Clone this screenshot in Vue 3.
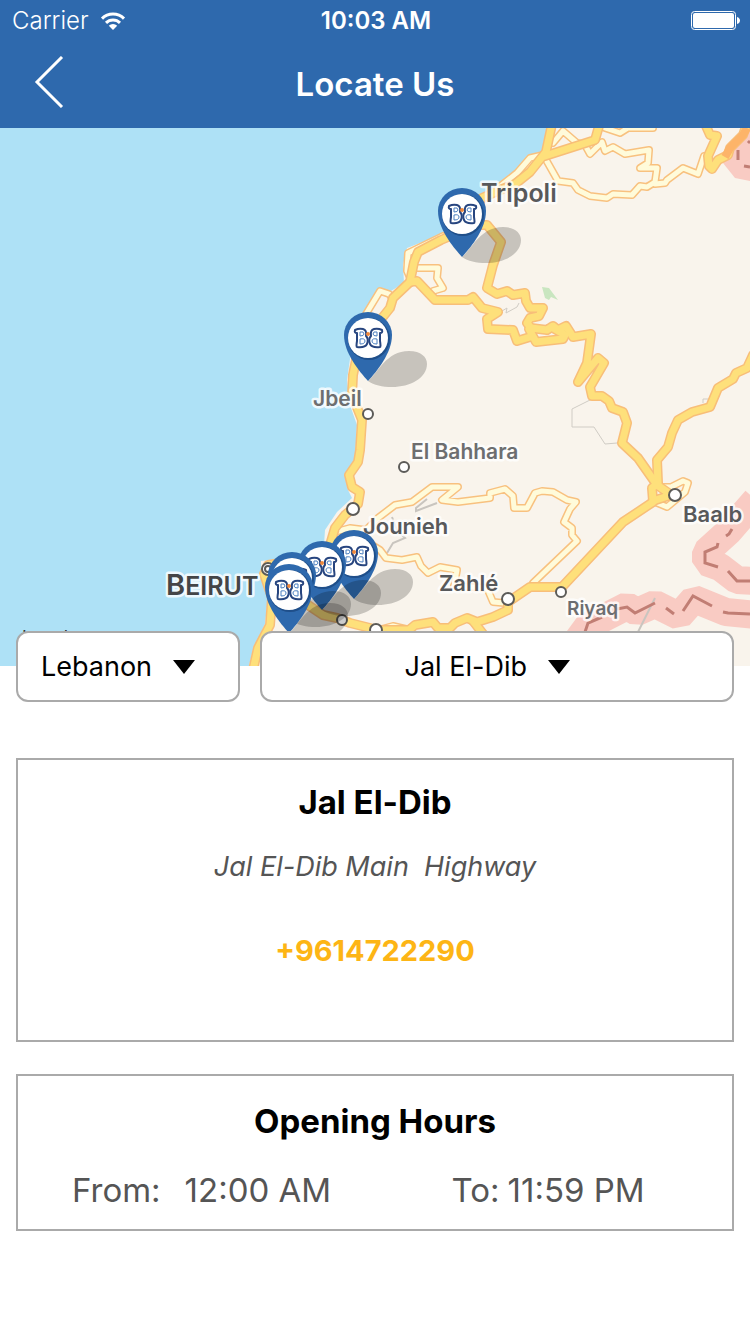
<script setup>
import { ref } from 'vue'

// LocateUs - store locator screen


const countries = ['Lebanon']
const branches = ['Jal El-Dib']

const country = ref('Lebanon')
const branch = ref('Jal El-Dib')
const address = 'Jal El-Dib Main  Highway'
const phone = '+9614722290'

// Map roads, drawn as casing first and fill on top
const minor_roads = [
   'M543 155L530 158L517 173L498 188',
   'M443 236L408 253L407 271L411 280',
   'M418 268L438 268L437 278L443 288L433 291',
   'M366 314L380 291L389 294L393 299',
   'M545 158L558 181L573 183L578 190L590 196L607 198L613 194L632 195L640 186L647 187L655 182L657 168L640 168L648 163L649 150L625 154L613 147L605 151L602 142L590 154L585 145L577 143L563 131L553 143',
   'M655 184L665 183L667 180L683 168L698 174L704 156',
   'M605 128L620 133L628 128L653 128',
   'M335 532L350 528L366 530L378 518L395 505L412 502L432 487L458 487L442 500L458 502L490 498L490 493L505 489L513 496L514 508L527 508L535 493L542 491L553 492L567 500L576 502L570 509L564 522L572 528L572 535L577 541L533 583',
   'M372 545L380 550L386 558L402 560L417 557L421 566L428 573L440 567L457 570L454 586L487 588L493 602L504 603',
   'M660 487L671 487L683 481L688 483L685 492L667 507L655 502',
   'M378 630L393 626L406 629',
]
const major_roads = [
   'M552 124L546 152L530 172L515 184L500 190L482 198L470 215L460 232L441 240L418 252L414 262L410 282L393 298L390 308L382 318L370 328L358 350L353 375L352 395L362 420L360 450L358 462L349 475L352 487L360 492L358 504L345 515L335 528L330 545L318 560',
   'M545 156L595 140L599 126',
   'M706 126L710 135L717 136L708 156L709 166L712 169L718 160L728 155L730 148L743 135L747 124',
   'M480 225L487 225L501 242L493 265L487 288L497 294L507 291L513 295L525 293L526 301L530 308L543 308L539 316L530 318L527 323L531 328L547 330L553 326L558 330L566 326L573 337L591 334L587 363L578 382L598 358L604 363L590 387L592 396L602 396L609 401L612 408L623 412L627 423L622 443L638 458L657 485L670 494',
   'M410 282L417 281L435 300L468 300L473 297L482 308L498 312L487 319L488 329L513 330L517 341L530 337',
   'M529 329L536 342L563 339L565 335L553 328',
   'M658 483L657 460L668 447L672 433L678 420L692 412L710 407L718 388L733 379L736 373L747 368L753 355',
   'M657 484L652 488L653 501L671 495',
   'M653 502L623 522L562 587L530 587L508 602L508 610L493 617L477 622L467 618L455 623L450 628L438 628L433 622L415 625L409 630L378 630L350 623L337 618L323 615L308 605',
   'M473 621L484 635',
   'M300 560L268 565L264 574L272 598L270 625L258 648L253 670',
]

const border_bands = [
   'M566 656L588 626L627 606L637 612L655 604L679 616L694 599L726 612L756 615',
   'M756 581L737 580L720 567L706 562L706 552L728 532L756 500',
]
const border_dashes = [
   'M585 632L588 623L602 617M612 610L627 607L635 613L655 603M666 608L674 614M683 611L693 596L712 606M723 612L728 613L750 614',
   'M732 529L729 534L726 536M718 543L717 547L705 552L705 563L718 567M728 571L737 581L750 581',
   'M738 150L738 160M744 166L750 167M748 143L750 141',
]

const towns = [
   { x: 368, y: 414, r: 5 },
   { x: 404, y: 467, r: 5 },
   { x: 353, y: 509, r: 6 },
   { x: 508, y: 599, r: 6 },
   { x: 561, y: 592, r: 5 },
   { x: 675, y: 495, r: 6 },
   { x: 342, y: 620, r: 5 },
   { x: 376, y: 630, r: 6 },
   { x: 268, y: 569, r: 6 },
   { x: 268, y: 569, r: 3 },
]

const labels = [
   { name: 'Tripoli', x: 481, y: 202, size: 'large' },
   { name: 'Jbeil', x: 313, y: 406, size: 'small' },
   { name: 'El Bahhara', x: 411, y: 459, size: 'small' },
   { name: 'Jounieh', x: 363, y: 534, size: 'medium' },
   { name: 'Zahlé', x: 439, y: 591, size: 'medium' },
   { name: 'Riyaq', x: 567, y: 615, size: 'tiny' },
   { name: 'Baalb', x: 683, y: 522, size: 'medium' },
]

// Pin tips, back to front
const pins = [
   { x: 462, y: 257 },
   { x: 368, y: 381 },
   { x: 354, y: 599 },
   { x: 322, y: 610 },
   { x: 292, y: 621 },
   { x: 289, y: 633 },
]
</script>


<template>
   <div class="screen">
      <header class="top_bar">
         <div class="status_bar">
            <div class="carrier">
               <span>Carrier</span>
               <svg class="wifi" viewBox="0 0 26 20" width="26" height="20" aria-hidden="true">
                  <path d="M2 7.600A15.500 15.500 0 0 1 24 7.600" />
                  <path d="M6 11.900A9.900 9.900 0 0 1 20 11.900" />
                  <path class="wifi_dot" d="M13 19L8.800 14.800A6 6 0 0 1 17.200 14.800Z" />
               </svg>
            </div>
            <span class="time">10:03 AM</span>
            <svg class="battery" viewBox="0 0 49 20" width="49" height="20" aria-hidden="true">
               <rect class="battery_case" x="0.500" y="0.500" width="44" height="18" rx="3" />
               <rect x="2" y="2" width="41" height="15" rx="2" />
               <path d="M46 6C50 7 50 12 46 13Z" />
            </svg>
         </div>
         <div class="nav_bar">
            <button class="back" type="button" aria-label="Back">
               <svg viewBox="0 0 30 52" width="30" height="52" aria-hidden="true">
                  <path d="M28 1L3 26L28 51" />
               </svg>
            </button>
            <h1>Locate Us</h1>
         </div>
      </header>

      <svg class="map" viewBox="0 128 750 538" preserveAspectRatio="xMidYMid slice" role="img" aria-label="Branches map">
         <defs>
            <g id="pin">
               <path class="pin_shadow" d="M0 0C10 -8 18 -30 41 -30C53 -30 59 -24 59 -17C59 -3 42 6 24 6C14 6 6 4 0 0Z" />
               <path class="pin_body" d="M0 0C-9 -10 -24 -28 -24 -46A24 23 0 0 1 24 -46C24 -28 9 -10 0 0Z" />
               <circle class="pin_rim" cx="1" cy="-42" r="21" />
               <circle class="pin_face" cx="0" cy="-43" r="20" />
               <g class="wings">
                  <path d="M-13 -51Q-9 -53 -5 -52Q-1 -51 -2 -45Q1 -42 -1 -37Q-3 -33 -11 -34Q-12 -34 -11 -40L-11 -48Q-14 -48 -13 -51Z" />
                  <path class="wing_inner" d="M-8 -49Q-4 -50 -4 -47Q-4 -45 -8 -45ZM-8 -42Q-3 -43 -3 -40Q-3 -37 -8 -37Z" />
                  <path d="M14 -51Q10 -53 6 -52Q2 -51 3 -45Q0 -42 2 -37Q4 -33 12 -34Q13 -34 12 -40L12 -48Q15 -48 14 -51Z" />
                  <path class="wing_inner" d="M9 -49Q5 -50 5 -47Q5 -45 9 -45ZM9 -42Q4 -43 4 -40Q4 -37 9 -37Z" />
                  <circle class="wing_head" cx="0" cy="-47" r="2" />
               </g>
            </g>
         </defs>

         <rect class="sea" x="0" y="128" width="750" height="538" />
         <path class="land" d="M549 128L543 153L530 155L516 172L498 185L478 198L455 222L438 236L407 248L403 265L404 283L391 291L378 288L364 314L352 345L347 380L350 405L357 425L355 460L345 473L348 490L352 498L337 512L325 530L324 545L300 556L261 561L261 574L268 598L265 624L253 650L249 666H750V128Z" />
         <path class="forest" d="M542 287L549 288L558 300L551 297L549 300L545 298Z" />
         <path class="district" d="M592 399L572 409V427H594L605 444L617 443M502 311L507 308L506 313L517 307L519 303M703 403V399H708" />
         <path class="track" d="M427 499L416 508L416 511L437 503M392 517L397 530L405 538L393 543L387 553" />

         <path class="zone" d="M747 128L730 149L723 163L735 178L750 181V128Z" />
         <path v-for="band in border_bands" :key="band" class="band" :d="band" />
         <path class="track" d="M655 598L637 634" />
         <path v-for="dash in border_dashes" :key="dash" class="dash" :d="dash" />

         <path v-for="road in minor_roads" :key="road" class="road minor_case" :d="road" />
         <path v-for="road in minor_roads" :key="road" class="road minor" :d="road" />
         <path v-for="road in major_roads" :key="road" class="road major_case" :d="road" />
         <path v-for="road in major_roads" :key="road" class="road major" :d="road" />
         <path class="crossing" d="M725 157L730 148L743 135L747 128" />

         <circle v-for="(town, i) in towns" :key="i" class="town" :cx="town.x" :cy="town.y" :r="town.r" />

         <text v-for="label in labels" :key="label.name" class="label" :class="label.size"
            :x="label.x" :y="label.y">{{ label.name }}</text>
         <text class="label capital" x="166" y="595">B<tspan class="capital_rest">EIRUT</tspan></text>
         <text class="legal" x="22" y="644">Legal</text>

         <use v-for="(pin, i) in pins" :key="i" href="#pin" :x="pin.x" :y="pin.y" />
      </svg>

      <main>
         <div class="pickers">
            <label class="picker">
               <select v-model="country" aria-label="Country">
                  <option v-for="item in countries" :key="item">{{ item }}</option>
               </select>
               <svg class="arrow" viewBox="0 0 22 14" width="22" height="14" aria-hidden="true"><path d="M0 0H22L11 14Z" /></svg>
            </label>
            <label class="picker">
               <select v-model="branch" aria-label="Branch">
                  <option v-for="item in branches" :key="item">{{ item }}</option>
               </select>
               <svg class="arrow" viewBox="0 0 22 14" width="22" height="14" aria-hidden="true"><path d="M0 0H22L11 14Z" /></svg>
            </label>
         </div>

         <section class="card branch">
            <h2>{{ branch }}</h2>
            <p class="address">{{ address }}</p>
            <a class="phone" :href="'tel:' + phone">{{ phone }}</a>
         </section>

         <section class="card hours">
            <h2>Opening Hours</h2>
            <div class="hours_row">
               <p class="from"><span>From:</span><span>12:00 AM</span></p>
               <p class="to"><span>To:</span><span>11:59 PM</span></p>
            </div>
         </section>
      </main>
   </div>
</template>


<style>
body {
   background:#fff;
}
</style>

<style scoped>
.screen {
   font-family:Inter, "Liberation Sans", sans-serif;
   color:#000;
}
h1, h2, p {
   margin:0;
}

.top_bar {
   background:#2e69ad;
   color:#fff;
}
.status_bar {
   display:grid;
   grid-template-columns:1fr auto 1fr;
   align-items:center;
   height:40px;
   padding:1px 10px 0 12px;
   box-sizing:border-box;
   font-size:24px;
}
.carrier {
   display:flex;
   align-items:center;
   gap:11px;
   font-weight:300;
}
.wifi {
   fill:none;
   stroke:#fff;
   stroke-width:3;
}
.wifi .wifi_dot {
   fill:#fff;
   stroke:none;
}
.time {
   font-weight:600;
}
.battery {
   justify-self:end;
   fill:#fff;
}
.battery_case {
   fill:none;
   stroke:#fff;
}
.nav_bar {
   display:grid;
   grid-template-columns:96px 1fr 96px;
   align-items:center;
   height:88px;
}
.nav_bar h1 {
   font-size:33px;
   font-weight:600;
   line-height:40px;
   text-align:center;
}
.back {
   height:88px;
   padding:0 0 4px 34px;
   border:0;
   background:none;
   text-align:left;
   cursor:pointer;
}
.back svg {
   display:block;
   fill:none;
   stroke:#fff;
   stroke-width:3;
}

.map {
   display:block;
   width:100%;
   height:538px;
}
.sea {
   fill:#aee1f6;
}
.land {
   fill:#f9f4ec;
}
.forest {
   fill:#c9e6c0;
}
.district {
   fill:none;
   stroke:#d0ccc5;
}
.track {
   fill:none;
   stroke:#c9c5bf;
   stroke-width:2;
}
.zone {
   fill:#f9cbc3;
}
.band {
   fill:none;
   stroke:#f9cbc3;
   stroke-width:28;
   stroke-linejoin:bevel;
}
.dash {
   fill:none;
   stroke:#c17e74;
   stroke-width:3;
}
.road {
   fill:none;
   stroke-linejoin:round;
   stroke-linecap:round;
}
.minor_case {
   stroke:#f8c17f;
   stroke-width:8;
}
.minor {
   stroke:#fffbda;
   stroke-width:5;
}
.major_case {
   stroke:#f8be79;
   stroke-width:10;
}
.major {
   stroke:#fee07b;
   stroke-width:7;
}
.crossing {
   fill:none;
   stroke:#fdb469;
   stroke-width:8;
}
.town {
   fill:#fff;
   stroke:#5c5b58;
   stroke-width:2;
}
.label {
   fill:#58595b;
   stroke:#fff;
   stroke-opacity:.8;
   stroke-width:5;
   stroke-linejoin:round;
   paint-order:stroke;
   font-weight:600;
}
.large {
   font-size:25px;
}
.medium {
   font-size:22px;
}
.small {
   font-size:21px;
   fill:#6d6e70;
}
.tiny {
   font-size:19px;
   fill:#6d6e70;
}
.capital {
   font-size:29px;
   fill:#444547;
}
.capital_rest {
   font-size:25px;
}
.legal {
   font-size:18px;
   fill:#333;
}
.pin_shadow {
   fill:#000;
   fill-opacity:.2;
}
.pin_body {
   fill:#2e69ad;
}
.pin_rim {
   fill:#1f4f8a;
}
.pin_face {
   fill:#fff;
}
.wings {
   fill:#fff;
   stroke:#27457f;
   stroke-width:2;
   stroke-linejoin:round;
}
.wings .wing_inner {
   stroke:#4a7fc0;
   stroke-width:1;
}
.wings .wing_head {
   fill:#f0883a;
   stroke:none;
}

main {
   display:flex;
   flex-direction:column;
   padding:0 16px 32px;
}
.pickers {
   position:relative;
   display:grid;
   grid-template-columns:112fr 237fr;
   gap:20px;
   margin-top:-35px;
}
.picker {
   display:flex;
   align-items:center;
   justify-content:center;
   gap:20px;
   box-sizing:border-box;
   height:71px;
   padding-right:20px;
   border:2px solid #aaa;
   border-radius:12px;
   background:#fff;
}
.picker select {
   appearance:none;
   padding:0;
   border:0;
   background:none;
   color:#000;
   font-family:inherit;
   font-size:27px;
   line-height:34px;
}
.arrow {
   flex:none;
   pointer-events:none;
}

.card {
   display:flex;
   flex-direction:column;
   align-items:center;
   border:2px solid #aaa;
}
.card h2 {
   font-size:33px;
   font-weight:700;
   line-height:40px;
}
.branch {
   margin-top:56px;
   padding:22px 16px 72px;
}
.address {
   margin-top:28px;
   color:#555;
   font-size:27px;
   font-style:italic;
   line-height:34px;
   white-space:pre-wrap;
}
.phone {
   margin-top:50px;
   color:#fdb515;
   font-size:29px;
   font-weight:700;
   line-height:34px;
   text-decoration:none;
}
.hours {
   margin-top:32px;
   padding:25px 0 18px;
}
.hours_row {
   display:grid;
   grid-template-columns:23fr 17fr;
   align-self:stretch;
   margin-top:28px;
   padding-left:54px;
   color:#555;
   font-size:33px;
   line-height:42px;
}
.hours_row p {
   display:flex;
}
.from {
   gap:24px;
}
.to {
   gap:8px;
}
</style>
